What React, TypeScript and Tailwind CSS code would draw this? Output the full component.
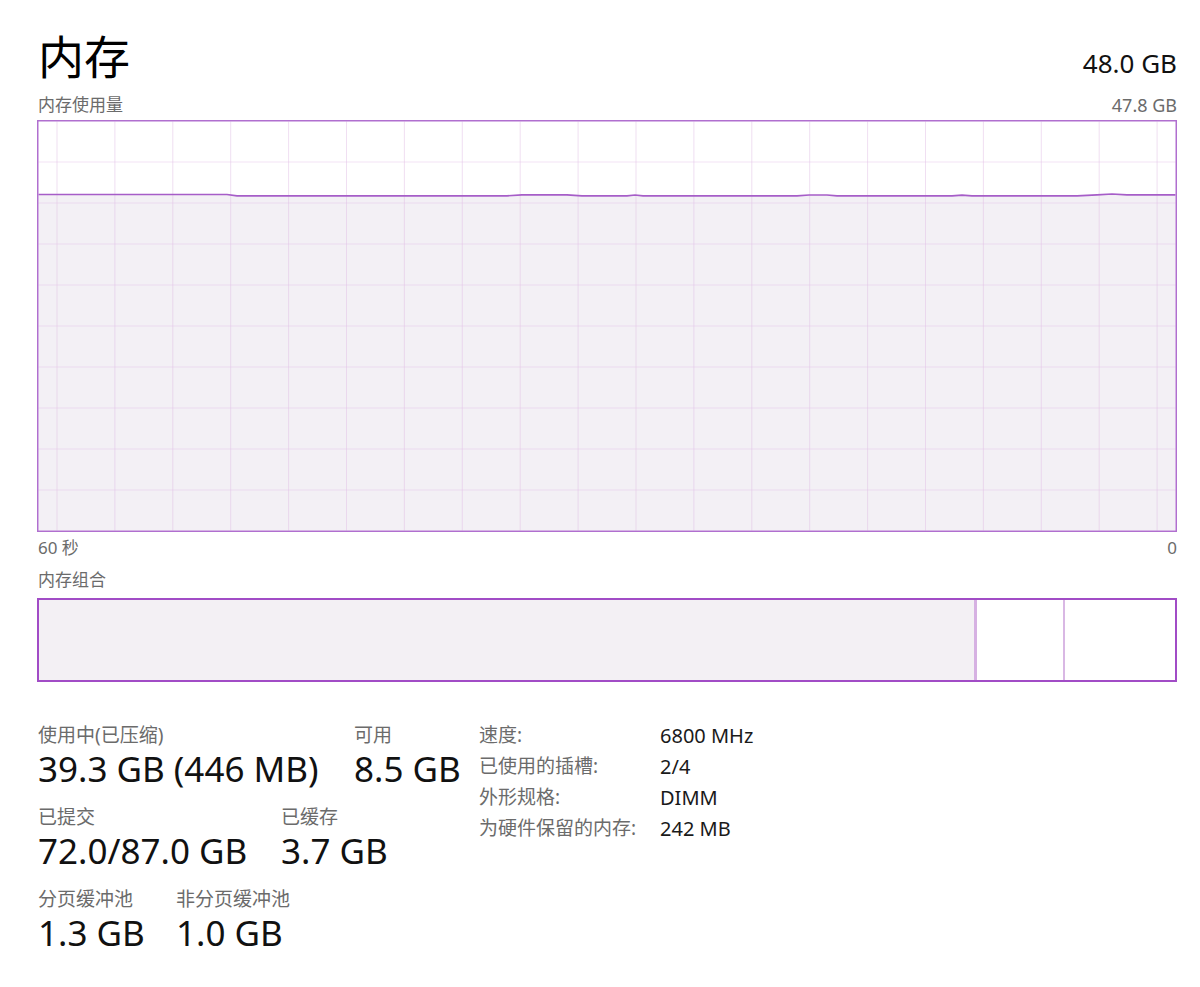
import React from "react";

const FONT = '"Noto Sans", "Noto Sans CJK SC", sans-serif';

const gridX = Array.from({ length: 20 }, (_, k) => 20 + 57.9 * k);
const gridY = Array.from({ length: 9 }, (_, k) => 42 + 41 * k);

const linePts: [number, number][] = [
  [1.5, 74.5],
  [190, 74.5],
  [200, 75.8],
  [470, 75.8],
  [485, 74.8],
  [530, 74.8],
  [545, 75.8],
  [590, 75.8],
  [598, 75],
  [606, 75.8],
  [760, 75.8],
  [772, 75],
  [790, 75],
  [800, 75.8],
  [915, 75.8],
  [925, 75.2],
  [935, 75.8],
  [1040, 75.8],
  [1060, 74.8],
  [1075, 74],
  [1090, 74.8],
  [1138.5, 74.8],
];

function UsageGraph() {
  const W = 1140;
  const H = 412;
  const line = linePts.map(([x, y], i) => `${i === 0 ? "M" : "L"}${x} ${y}`).join(" ");
  const fill = `${line} L1138.5 ${H - 1.5} L1.5 ${H - 1.5} Z`;
  return (
    <svg width={W} height={H} viewBox={`0 0 ${W} ${H}`} className="block">
      <rect x={0} y={0} width={W} height={H} fill="#ffffff" />
      <path d={fill} fill="#f3f0f5" />
      {gridX.map((x) => (
        <line key={"x" + x} x1={x} y1={1.5} x2={x} y2={H - 1.5} stroke="#e2bfe6" strokeOpacity={0.5} strokeWidth={1} />
      ))}
      {gridY.map((y) => (
        <line key={"y" + y} x1={1.5} y1={y} x2={W - 1.5} y2={y} stroke="#e2bfe6" strokeOpacity={0.45} strokeWidth={1} />
      ))}
      <path d={line} fill="none" stroke="#a65dc8" strokeWidth={1.7} />
      <rect x={0.75} y={0.75} width={W - 1.5} height={H - 1.5} fill="none" stroke="#b06fcf" strokeWidth={1.5} />
    </svg>
  );
}

function Stat({ label, value, w }: { label: string; value: string; w?: string }) {
  return (
    <div className={w ?? ""}>
      <div className="h-[24px] leading-[24px] text-[19px] text-[#6b6b6b] whitespace-nowrap">{label}</div>
      <div className="h-[44px] leading-[44px] text-[35px] text-[#111111] whitespace-nowrap">{value}</div>
    </div>
  );
}

export default function App() {
  return (
    <div className="w-[1200px] h-[987px] bg-white overflow-hidden" style={{ fontFamily: FONT }}>
      <div className="ml-[37px] w-[1140px] pt-[28px]">
        {/* Header */}
        <div className="flex justify-between h-[56px]">
          <div className="pl-[1px] h-[56px] leading-[56px] text-[46px] text-black">内存</div>
          <div className="mt-[21px] h-[28px] leading-[28px] text-[26px] text-[#111111]">48.0 GB</div>
        </div>

        {/* usage label row */}
        <div className="mt-[10px] flex justify-between h-[22px] leading-[22px] text-[17px] text-[#6b6b6b]">
          <span className="pl-[1px]">内存使用量</span>
          <span className="text-[18px]">47.8 GB</span>
        </div>

        <div className="mt-[4px]">
          <UsageGraph />
        </div>

        <div className="mt-[5px] flex justify-between h-[22px] leading-[22px] text-[17px] text-[#6b6b6b]">
          <span className="pl-[1px]">60 秒</span>
          <span>0</span>
        </div>

        <div className="mt-[10px] h-[22px] leading-[22px] text-[17px] text-[#6b6b6b] pl-[1px]">内存组合</div>

        {/* composition bar */}
        <div className="mt-[7px] h-[84px] border-[2.5px] border-[#a14cc6] flex">
          <div className="w-[935px] bg-[#f3f0f4]" />
          <div className="w-[3px] bg-[#d6b1e2]" />
          <div className="w-[86px] bg-white" />
          <div className="w-[2px] bg-[#d9b8e4]" />
          <div className="flex-1 bg-white" />
        </div>

        {/* stats */}
        <div className="mt-[38px] flex items-start">
          <div className="w-[442px] pt-[3px] pl-[1px] flex flex-col gap-[14px]">
            <div className="flex">
              <Stat w="w-[316px]" label="使用中(已压缩)" value="39.3 GB (446 MB)" />
              <Stat label="可用" value="8.5 GB" />
            </div>
            <div className="flex">
              <Stat w="w-[243px]" label="已提交" value="72.0/87.0 GB" />
              <Stat label="已缓存" value="3.7 GB" />
            </div>
            <div className="flex">
              <Stat w="w-[138px]" label="分页缓冲池" value="1.3 GB" />
              <Stat label="非分页缓冲池" value="1.0 GB" />
            </div>
          </div>
          <div className="grid grid-cols-[181px_auto] content-start leading-[31px]">
            <div className="h-[31px] text-[19px] text-[#6b6b6b]">速度:</div>
            <div className="h-[31px] text-[20px] text-[#1a1a1a]">6800 MHz</div>
            <div className="h-[31px] text-[19px] text-[#6b6b6b]">已使用的插槽:</div>
            <div className="h-[31px] text-[20px] text-[#1a1a1a]">2/4</div>
            <div className="h-[31px] text-[19px] text-[#6b6b6b]">外形规格:</div>
            <div className="h-[31px] text-[20px] text-[#1a1a1a]">DIMM</div>
            <div className="h-[31px] text-[19px] text-[#6b6b6b]">为硬件保留的内存:</div>
            <div className="h-[31px] text-[20px] text-[#1a1a1a]">242 MB</div>
          </div>
        </div>
      </div>
    </div>
  );
}
